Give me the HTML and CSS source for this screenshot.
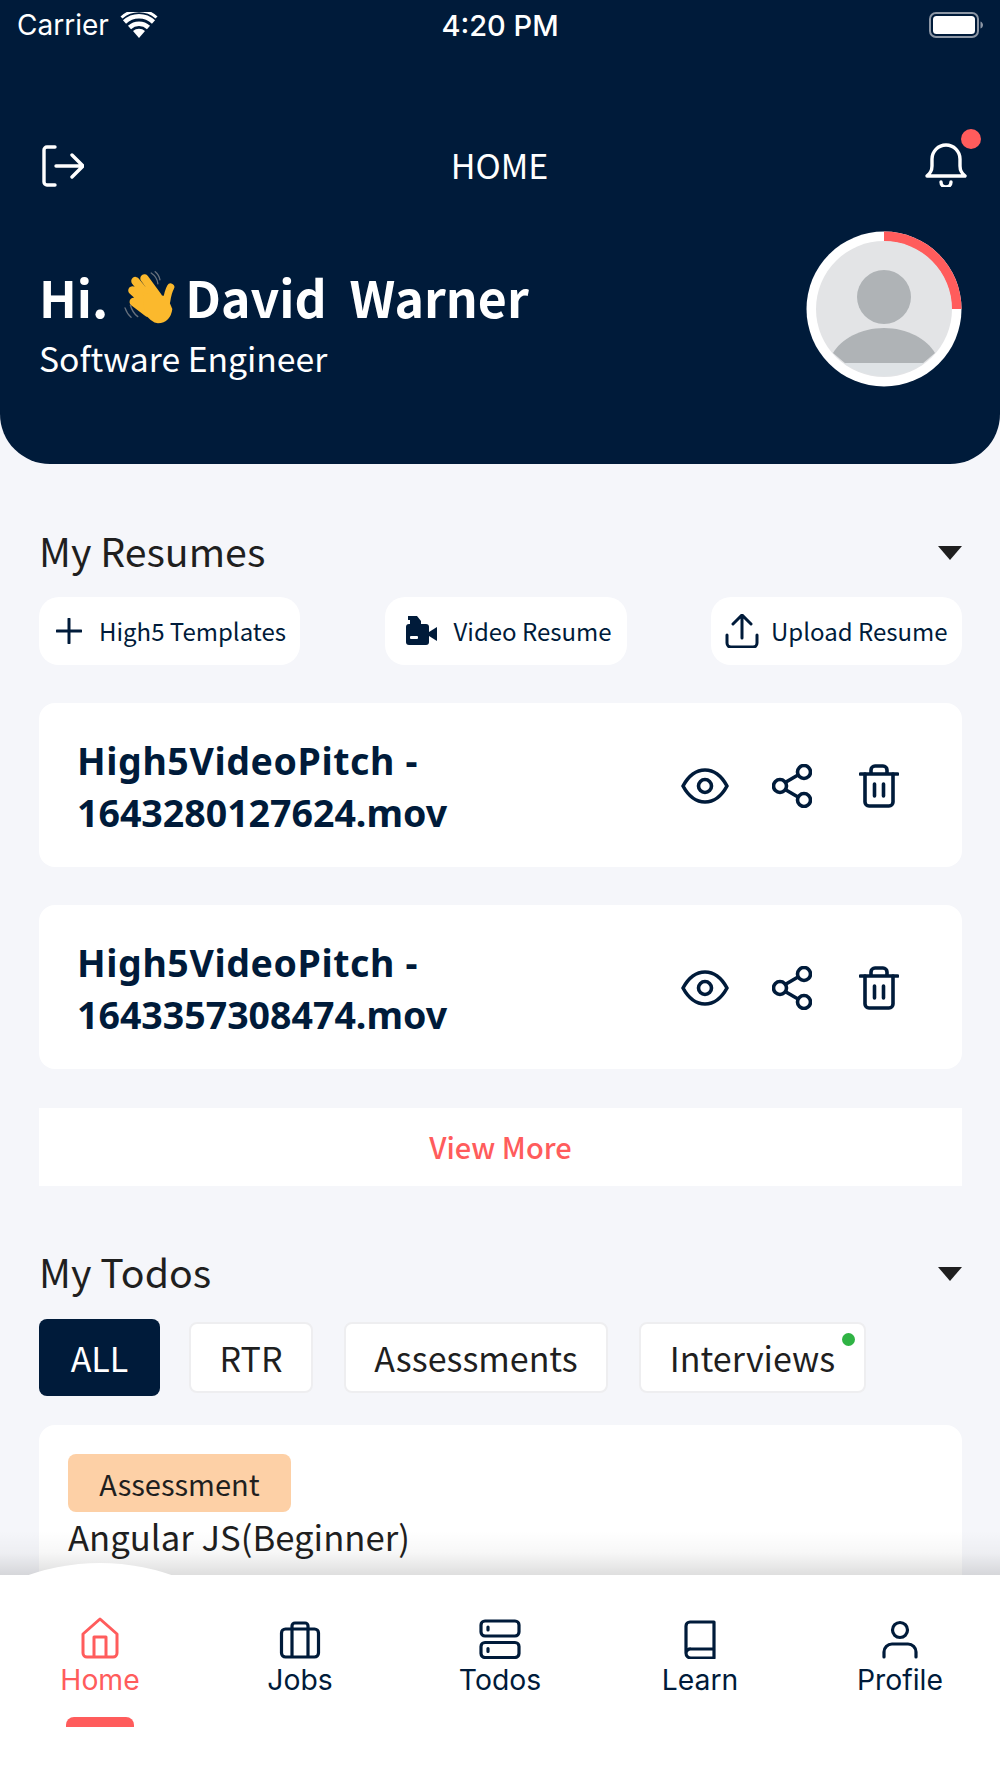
FILE: index.html
```html
<!DOCTYPE html>
<html lang="en">
<head>
    <meta charset="UTF-8">
    <meta name="viewport" content="width=device-width, initial-scale=1.0">
    <title>Home</title>
    <link rel="stylesheet" href="styles.css">
</head>
<body>
<div class="screen">
    <header class="hero">
        <div class="status-bar">
            <div class="status-left">
                <span class="carrier">Carrier</span>
                <svg class="wifi" width="38" height="26" viewBox="0 0 38 26"><path d="M19 26l-6-7a9 9 0 0 1 12 0z" fill="#fff"/><path d="M9.500 15.500a14 14 0 0 1 19 0M4.500 10a21 21 0 0 1 29 0" fill="none" stroke="#fff" stroke-width="4.500"/><path d="M1.500 5.500a26 26 0 0 1 35 0" fill="none" stroke="#fff" stroke-width="3"/></svg>
            </div>
            <span class="clock">4:20 PM</span>
            <svg class="battery" width="54" height="26" viewBox="0 0 54 26"><rect x="1" y="1" width="48" height="24" rx="6" fill="none" stroke="#8d97a5" stroke-width="2"/><rect x="4" y="4" width="42" height="18" rx="3.500" fill="#fff"/><path d="M51.500 9.500c1.500.5 2.500 2 2.500 3.500s-1 3-2.500 3.500z" fill="#8d97a5"/></svg>
        </div>
        <div class="top-bar">
            <svg class="logout" width="42" height="42" viewBox="0 0 42 42" fill="none" stroke="#fff" stroke-width="3.400" stroke-linecap="round" stroke-linejoin="round"><path d="M13 2H5a3 3 0 0 0-3 3v32a3 3 0 0 0 3 3h8"/><path d="M14 21h26M30 10l11 11-11 11"/></svg>
            <span class="page-title">HOME</span>
            <div class="bell-wrap">
                <svg width="42" height="46" viewBox="0 0 42 46" fill="none" stroke="#fff" stroke-width="3.400" stroke-linecap="round" stroke-linejoin="round"><path d="M2 35c3-3 5-5 5-10v-7a14 14 0 0 1 28 0v7c0 5 2 7 5 10z"/><path d="M16 41a5 5 0 0 0 10 0"/></svg>
                <span class="bell-dot"></span>
            </div>
        </div>
        <div class="greeting-row">
            <div class="greeting">
                <h1 class="hello">
                    <span>Hi.</span>
                    <svg class="wave" width="57" height="57" viewBox="60 40 170 170">
                        <path d="M150 46q18 12 20 32M162 42q12 10 14 24M88 142q6 22 22 34M72 150q6 18 18 28" fill="none" stroke="#66707c" stroke-width="4" stroke-linecap="round"/>
                        <g fill="none" stroke="#fbb92d" stroke-width="25" stroke-linecap="round">
                            <path d="M103 70l50 62M130 62l40 55M94 98l46 42M98 132l42 32"/>
                            <path d="M208 88q-8 14-12 42" stroke-width="22"/>
                        </g>
                        <path d="M125 105l72 10 16 38q-5 40-43 43-20-2-40-30z" fill="#fbb92d"/>
                    </svg>
                    <span class="name">David&nbsp; Warner</span>
                </h1>
                <p class="role">Software Engineer</p>
            </div>
            <svg class="avatar" width="156" height="156" viewBox="0 0 156 156">
                <circle cx="78" cy="78" r="77.500" fill="#fff"/>
                <path d="M78 .5A77.500 77.500 0 0 1 155.500 78H145.500A67.500 67.500 0 0 0 78 10.500z" fill="#ff5c5c"/>
                <circle cx="78" cy="78" r="68" fill="#e3e4e6"/>
                <circle cx="78" cy="66" r="27" fill="#afb3b6"/>
                <path d="M27 122c8-14 28-25 51-25s43 11 51 25l-13 11H40z" fill="#afb3b6"/>
                <path d="M38 132H118A68 68 0 0 1 38 132z" fill="#dfe3e6"/>
            </svg>
        </div>
    </header>

    <main class="content">
        <section class="resumes">
            <div class="section-head">
                <h2>My Resumes</h2>
                <span class="caret"></span>
            </div>
            <div class="resume-actions">
                <button class="action action-new">
                    <svg width="26" height="26" viewBox="0 0 26 26" fill="none" stroke="#001b3a" stroke-width="3" stroke-linecap="round"><path d="M13 1v24M1 13h24"/></svg>
                    <span>High5 Templates</span>
                </button>
                <button class="action action-video">
                    <svg width="32" height="30" viewBox="0 0 32 30" fill="#001b3a"><path d="M3 0h9l4 5v4H5V4H3z"/><rect x="1" y="8" width="23" height="21" rx="3"/><path d="M24 16l8-5v14l-8-5z"/><rect x="5" y="20" width="8" height="3" rx="1" fill="#fff"/></svg>
                    <span>Video Resume</span>
                </button>
                <button class="action action-upload">
                    <svg width="34" height="34" viewBox="0 0 34 34" fill="none" stroke="#001b3a" stroke-width="3" stroke-linecap="round" stroke-linejoin="round"><path d="M17 24V2M8 10l9-9 9 9"/><path d="M2 21v8a4 4 0 0 0 4 4h22a4 4 0 0 0 4-4v-8"/></svg>
                    <span>Upload Resume</span>
                </button>
            </div>

            <div class="resume-card">
                <p class="file-name"><span class="file-stem">High5VideoPitch -</span> 1643280127624.mov</p>
                <div class="file-icons">
                    <svg width="48" height="36" viewBox="0 0 48 36" fill="none" stroke="#001b3a" stroke-width="3.600" stroke-linejoin="round"><path d="M2 18C8 7 15 2 24 2s16 5 22 16c-6 11-13 16-22 16S8 29 2 18z"/><circle cx="24" cy="18" r="6.500"/></svg>
                    <svg class="share" width="40" height="44" viewBox="0 0 40 44" fill="none" stroke="#001b3a" stroke-width="3.600"><circle cx="8" cy="22" r="6.500"/><circle cx="32" cy="8" r="6.500"/><circle cx="32" cy="36" r="6.500"/><path d="M14 18l12-7M14 26l12 7"/></svg>
                    <svg width="40" height="44" viewBox="0 0 40 44" fill="none" stroke="#001b3a" stroke-width="3.600" stroke-linecap="round" stroke-linejoin="round"><path d="M1.500 10h37M12 9V6a4 4 0 0 1 4-4h8a4 4 0 0 1 4 4v3"/><path d="M6 10v28a4 4 0 0 0 4 4h20a4 4 0 0 0 4-4V10"/><path d="M15.500 20v12M24.500 20v12"/></svg>
                </div>
            </div>
            <div class="resume-card">
                <p class="file-name"><span class="file-stem">High5VideoPitch -</span> 1643357308474.mov</p>
                <div class="file-icons">
                    <svg width="48" height="36" viewBox="0 0 48 36" fill="none" stroke="#001b3a" stroke-width="3.600" stroke-linejoin="round"><path d="M2 18C8 7 15 2 24 2s16 5 22 16c-6 11-13 16-22 16S8 29 2 18z"/><circle cx="24" cy="18" r="6.500"/></svg>
                    <svg class="share" width="40" height="44" viewBox="0 0 40 44" fill="none" stroke="#001b3a" stroke-width="3.600"><circle cx="8" cy="22" r="6.500"/><circle cx="32" cy="8" r="6.500"/><circle cx="32" cy="36" r="6.500"/><path d="M14 18l12-7M14 26l12 7"/></svg>
                    <svg width="40" height="44" viewBox="0 0 40 44" fill="none" stroke="#001b3a" stroke-width="3.600" stroke-linecap="round" stroke-linejoin="round"><path d="M1.500 10h37M12 9V6a4 4 0 0 1 4-4h8a4 4 0 0 1 4 4v3"/><path d="M6 10v28a4 4 0 0 0 4 4h20a4 4 0 0 0 4-4V10"/><path d="M15.500 20v12M24.500 20v12"/></svg>
                </div>
            </div>
            <div class="view-more">View More</div>
        </section>

        <section class="todos">
            <div class="section-head">
                <h2>My Todos</h2>
                <span class="caret"></span>
            </div>
            <div class="todo-tabs">
                <div class="tab tab-active">ALL</div>
                <div class="tab tab-rtr">RTR</div>
                <div class="tab tab-assess">Assessments</div>
                <div class="tab tab-interviews">Interviews<span class="tab-dot"></span></div>
            </div>
            <div class="todo-card">
                <span class="tag">Assessment</span>
                <p class="todo-title">Angular JS(Beginner)</p>
            </div>
        </section>
    </main>

    <nav class="tabbar">
        <div class="nav-item nav-active">
            <svg width="38" height="42" viewBox="0 0 38 42" fill="none" stroke="#ff5c5c" stroke-width="3" stroke-linejoin="round"><path d="M19 2L2 17v19a4 4 0 0 0 4 4h26a4 4 0 0 0 4-4V17z"/><path d="M13 40V20h12v20"/></svg>
            <span>Home</span>
            <i class="nav-bar"></i>
        </div>
        <div class="nav-item">
            <svg width="42" height="42" viewBox="0 0 42 42" fill="none" stroke="#001b3a" stroke-width="3.200" stroke-linejoin="round"><rect x="2.500" y="12" width="37" height="28" rx="4"/><path d="M13 12V9a3 3 0 0 1 3-3h10a3 3 0 0 1 3 3v3M13 12v28M29 12v28"/></svg>
            <span>Jobs</span>
        </div>
        <div class="nav-item">
            <svg width="42" height="42" viewBox="0 0 42 42" fill="none" stroke="#001b3a" stroke-width="3.200"><rect x="2" y="4" width="38" height="15" rx="4"/><rect x="2" y="25.500" width="38" height="15" rx="4"/><path d="M9 10v3M9 31.500v3" stroke-linecap="round"/></svg>
            <span>Todos</span>
        </div>
        <div class="nav-item">
            <svg width="36" height="42" viewBox="0 0 36 42" fill="none" stroke="#001b3a" stroke-width="3.200" stroke-linejoin="round"><path d="M4 36V9a4 4 0 0 1 4-4h24v36H9a5 5 0 0 1-5-5 4.500 4.500 0 0 1 5-4h23"/></svg>
            <span>Learn</span>
        </div>
        <div class="nav-item">
            <svg width="36" height="42" viewBox="0 0 36 42" fill="none" stroke="#001b3a" stroke-width="3.200" stroke-linecap="round"><circle cx="18" cy="13" r="7.500"/><path d="M2 40V35a8 8 0 0 1 8-8h16a8 8 0 0 1 8 8v5"/></svg>
            <span>Profile</span>
        </div>
    </nav>
</div>
</body>
</html>
```

FILE: styles.css
```css
* {
    box-sizing: border-box;
}
html, body {
    margin: 0;
    padding: 0;
}
body {
    font-family: "Noto Sans CJK SC", "Noto Sans", sans-serif;
    background-color: #f5f6fa;
    color: #1f1f1f;
}
h1, h2, p {
    margin: 0;
    font-weight: 400;
}
.screen {
    position: relative;
    width: 1000px;
    height: 1778px;
    overflow: hidden;
}

/* header */
.hero {
    height: 464px;
    padding: 0 17px 0 0;
    background-color: #001b3a;
    border-radius: 0 0 50px 50px;
    color: #fff;
}
.status-bar {
    display: flex;
    align-items: center;
    justify-content: space-between;
    height: 50px;
    padding-left: 17px;
    position: relative;
}
.status-left {
    display: flex;
    align-items: center;
    gap: 11px;
}
.carrier {
    font-family: Inter, sans-serif;
    font-size: 28px;
}
.clock {
    position: absolute;
    left: 0;
    width: 1000px;
    text-align: center;
    font-family: Inter, sans-serif;
    font-size: 29px;
    font-weight: 500;
}
.top-bar {
    display: flex;
    align-items: center;
    justify-content: space-between;
    height: 60px;
    margin-top: 86px;
    padding: 0 16px 0 42px;
}
.page-title {
    font-size: 34px;
    margin-left: -10px;
    margin-bottom: 4px;
}
.bell-wrap {
    position: relative;
    height: 46px;
    margin-top: -4px;
}
.bell-dot {
    position: absolute;
    top: -12px;
    right: -14px;
    width: 20px;
    height: 20px;
    border-radius: 50%;
    background-color: #ff5c5c;
}
.greeting-row {
    display: flex;
    justify-content: space-between;
    align-items: flex-start;
    margin-top: 24px;
    padding-left: 39px;
    padding-right: 21px;
}
.hello {
    display: flex;
    align-items: center;
    gap: 12px;
    margin-top: 46px;
    height: 60px;
    font-size: 50px;
    font-weight: 700;
}
.wave {
    margin: 6px -5px 0 1px;
}
.role {
    font-size: 33.7px;
    line-height: 46px;
    margin-top: 9px;
}
.avatar {
    margin-top: 11px;
}

/* content */
.content {
    padding: 0 38px 0 39px;
}
.section-head {
    display: flex;
    align-items: center;
    justify-content: space-between;
    height: 56px;
}
.section-head h2 {
    font-size: 39.3px;
    padding-bottom: 7px;
}
.caret {
    width: 0;
    height: 0;
    border-left: 12px solid transparent;
    border-right: 12px solid transparent;
    border-top: 14px solid #1f1f1f;
}
.resumes {
    padding-top: 61px;
}
.resume-actions {
    display: flex;
    justify-content: space-between;
    margin-top: 16px;
}
.action {
    display: flex;
    align-items: center;
    height: 68px;
    border: 0;
    border-radius: 20px;
    background-color: #fff;
    color: #001b3a;
    font-family: inherit;
    font-size: 24px;
    white-space: nowrap;
}
.action span {
    margin-top: -2px;
}
.action-new {
    width: 261px;
    gap: 17px;
    padding: 0 0 0 17px;
}
.action-video {
    width: 242px;
    gap: 17px;
    padding: 0 0 0 20px;
}
.action-upload {
    width: 251px;
    gap: 12px;
    padding: 0 0 0 14px;
}
.resume-card {
    display: flex;
    align-items: center;
    justify-content: space-between;
    height: 164px;
    margin-top: 38px;
    padding: 0 63px 0 38px;
    background-color: #fff;
    border-radius: 16px;
}
.file-name {
    width: 400px;
    padding-top: 3px;
    font-family: "Noto Sans", sans-serif;
    font-size: 37.5px;
    font-weight: 700;
    line-height: 52px;
    color: #001b3a;
}
.file-stem {
    letter-spacing: 0.6px;
}
.file-icons {
    display: flex;
    align-items: center;
    gap: 43px;
    margin-top: 2px;
}
.share {
    margin-right: 4px;
}
.view-more {
    display: flex;
    align-items: center;
    justify-content: center;
    height: 78px;
    margin-top: 39px;
    padding-bottom: 2px;
    background-color: #fff;
    color: #ff5c5c;
    font-size: 29px;
    font-weight: 500;
}
.todos {
    padding-top: 60px;
}
.todo-tabs {
    display: flex;
    align-items: center;
    margin-top: 17px;
}
.tab {
    position: relative;
    display: flex;
    align-items: center;
    justify-content: center;
    height: 71px;
    margin-right: 31px;
    background-color: #fff;
    border: 2px solid #eeeef0;
    border-radius: 8px;
    font-size: 34px;
}
.tab-active {
    width: 121px;
    height: 77px;
    margin-right: 29px;
    background-color: #001b3a;
    border: 0;
    color: #fff;
}
.tab-rtr {
    width: 124px;
}
.tab-assess {
    width: 264px;
}
.tab-interviews {
    width: 227px;
}
.tab-dot {
    position: absolute;
    top: 9px;
    right: 9px;
    width: 13px;
    height: 13px;
    border-radius: 50%;
    background-color: #2fb344;
}
.todo-card {
    height: 300px;
    margin-top: 29px;
    padding: 29px 29px;
    background-color: #fff;
    border-radius: 16px;
}
.tag {
    display: inline-block;
    width: 223px;
    height: 58px;
    line-height: 58px;
    text-align: center;
    background-color: #fdd0a6;
    border-radius: 8px;
    font-size: 29px;
}
.todo-title {
    font-size: 34.7px;
    line-height: 50px;
    margin-top: -1px;
}

/* bottom nav */
.tabbar {
    position: absolute;
    left: 0;
    right: 0;
    bottom: 0;
    height: 203px;
    display: grid;
    grid-template-columns: repeat(5, 200px);
    background-color: #fff;
}
.tabbar::before {
    content: "";
    position: absolute;
    left: 0;
    right: 0;
    top: -44px;
    height: 44px;
    background: linear-gradient(to bottom, rgba(0, 0, 0, 0), rgba(0, 0, 0, 0.03) 50%, rgba(0, 0, 0, 0.13));
}
.tabbar::after {
    content: "";
    position: absolute;
    top: -12px;
    left: -120px;
    width: 440px;
    height: 440px;
    border-radius: 50%;
    background-color: #fff;
}
.nav-item {
    position: relative;
    z-index: 1;
    display: flex;
    flex-direction: column;
    align-items: center;
    padding-top: 42px;
    font-family: Inter, sans-serif;
    font-size: 28.300px;
    color: #001b3a;
}
.nav-item svg {
    height: 42px;
}
.nav-item span {
    line-height: 38px;
    margin-top: 2px;
}
.nav-active {
    color: #ff5c5c;
}
.nav-bar {
    position: absolute;
    top: 142px;
    width: 68px;
    height: 10px;
    background-color: #ff5c5c;
    border-radius: 8px 8px 0 0;
}
```
